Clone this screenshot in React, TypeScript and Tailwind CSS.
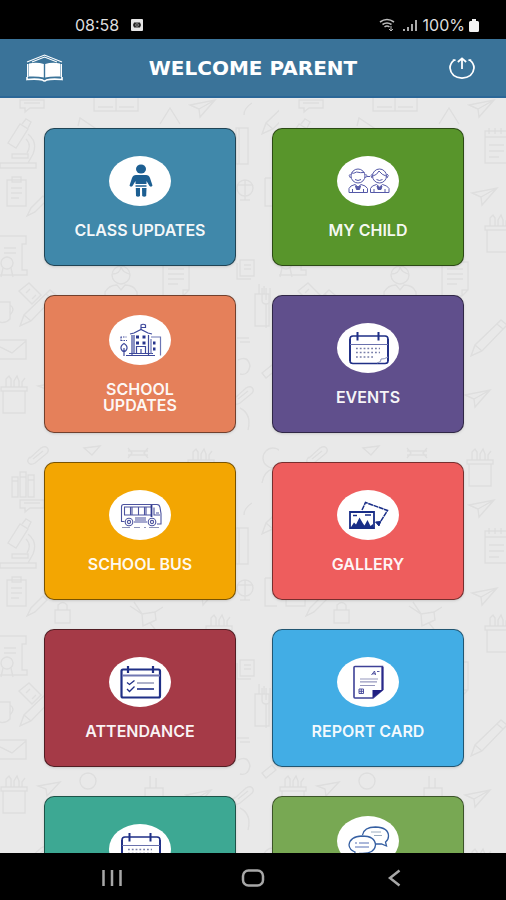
import type { ReactNode } from 'react'

const NAVY = '#1f2f86'

function ChildIcon() {
  return (
    <g fill="#1d5f92">
      <ellipse cx="32" cy="13" rx="5" ry="4.5" />
      <path d="M27 19 h10 q3 0 4 3 l2.500 7.500 q-1 2 -3 .5 l-3 -5 v3 h-11 v-3 l-3 5 q-2 1.500 -3 -.5 l2.500 -7.500 q1 -3 4 -3z" />
      <path d="M26.500 29 h11 v2 h-11z" opacity=".75" />
      <path d="M26.800 32 h4.200 v8 q-2 1.500 -4 0z M33 32 h4.500 l-.3 8 q-2 1.500 -4 0z" />
    </g>
  )
}

function KidsIcon() {
  return (
    <g fill="none" stroke="#5559a8" strokeWidth="1">
      <ellipse cx="21" cy="20" rx="7" ry="7" />
      <path d="M14.500 17 q2 1 5 -1 q4 1 8 .5 M13.500 18 q-2.500 1 0 4 M28.500 18 q2.500 1 0 4 M18 23.500 q3 2 6 0" />
      <path d="M12 36.500 v-4 q1 -3 6 -4 l3 2.500 3 -2.500 q5 1 6.500 4 v4z M15.500 36 v-3 M26.500 36 v-3" />
      <path d="M18.500 30 l2.500 1.500 2.500 -1.500 -1 3.500 h-3z" fill="#5559a8" />
      <ellipse cx="42.500" cy="20" rx="7" ry="7" />
      <path d="M36 20 q4 -1 6 -5 q3 4 7 5 M35.500 18 q-3 1 -.5 4 M50 18 q2.500 1 0 4 M39.500 23.500 q3 2 6 0 M30 20.500 h3" />
      <path d="M33.500 36.500 v-4 q1 -3 6 -4 l3 2.500 3 -2.500 q5 1 6.500 4 v4z M37 36 v-3 M48 36 v-3" />
      <path d="M40 30 l2.500 1.500 2.500 -1.500 -1 3.500 h-3z" fill="#5559a8" />
    </g>
  )
}

function SchoolIcon() {
  return (
    <g fill="none" stroke="#3c489b" strokeWidth="1.200">
      <path d="M32 15 V10 q2 -1.500 4.500 0 v2.500 h-4" />
      <path d="M21 19 l4 -1 7 -3.500 7 3.500 4 1" />
      <path d="M23 20 v20 M39.500 20 v20 M17 40.500 h29 M20 38.500 h24 M25 20 v18" />
      <path d="M42 22 h9.500 v18.500 M42 24 v15" stroke="#6c76b5" />
      <path d="M27.500 38 v-6.500 h9 v6.500 M32 38 v-4" />
      <path d="M11.500 22 h6 M12 25.500 h6 M12 22 v5" strokeDasharray="1.500 1" />
      <path d="M15 28.500 q-3.500 2 -3 5 q1 3 3 3 q2 0 3 -3 q.5 -3 -3 -5z M15 33 v8" />
      <path d="M27 20.500 h3 v3 h-3z M33.500 20.500 h3 v3 h-3z M27 26.500 h3 v3 h-3z M33.500 26.500 h3 v3 h-3z M44 26.500 h2.500 v3 h-2.500z M44 32.500 h2.500 v3 h-2.500z" fill="#27348d" stroke="none" />
    </g>
  )
}

function CalendarIcon() {
  return (
    <g fill="none" stroke={NAVY}>
      <path d="M16 13 H48 q3 0 3 3 V38 q0 2.500 -3 2.500 H16 q-3 0 -3 -2.500 V16 q0 -3 3 -3z" strokeWidth="1.600" />
      <path d="M13 16 v22 M51 16 v22" strokeWidth="1.800" />
      <path d="M20.500 9 v8.500 M41.500 9 v8.500" strokeWidth="2" />
      <path d="M13 21.500 h38" stroke="#6971ad" />
      <path d="M19 25.500 h24 M19 29.500 h24 M19 34 h17" stroke="#777ea8" strokeWidth="1.500" strokeDasharray="1.800 2" />
      <path d="M40 40 q5 -1 4 -4 q3 .5 7 -2" stroke="#8b96bb" />
    </g>
  )
}

function BusIcon() {
  return (
    <g fill="none" stroke="#4c539f" strokeWidth="1.100">
      <path d="M14 14.500 H48 q2.500 0 3 3 l1 6 v10.500 h-4 M12.500 32 V17 q0 -2.500 2 -2.500 M12.500 31.500 h3 M25 32 h13" />
      <path d="M15.500 17 v8 M21.500 17 v8 M23 17 v8 M29.500 17 v8 M35.500 17 v8 M37 17 v8 M15 25 h27 M15 17 h27" />
      <path d="M42.500 15 v12" strokeWidth="1.800" stroke="#30388d" />
      <path d="M45 17.500 v7.500 h6 M47 23 h3 M26 28 h11 M26 30 h11" />
      <circle cx="20" cy="32" r="3.800" />
      <circle cx="20" cy="32" r="1.600" />
      <circle cx="43" cy="32" r="3.800" />
      <circle cx="43" cy="32" r="1.600" />
      <path d="M13 37.500 h8 M25 37.500 h6 M35 37.500 h2 M40 37.500 h10" stroke="#8e93b8" />
    </g>
  )
}

function GalleryIcon() {
  return (
    <g fill="none" stroke="#182d87" strokeWidth="1.800">
      <path d="M25 20 L28.500 12.500 L50.500 20.500 L42 34" strokeWidth="1.500" strokeDasharray="5 .6" />
      <path d="M38.500 32 l5 -.5 -1.500 4.500z" fill="#182d87" strokeWidth="1" />
      <path d="M13 22 H37 V38 H13z" fill="#fff" />
      <path d="M14 37 l3 -4.500 2 2 3.500 -7 3.500 6 1.500 2 3 -5.500 3 6 2.500 -2 v3.500z" fill="#182d87" stroke="none" />
      <path d="M16 25.500 h4 M28 25 h6" strokeWidth="1.400" />
    </g>
  )
}

function AttendanceIcon() {
  return (
    <g fill="none" stroke={NAVY}>
      <path d="M13.500 12.500 H49.500 q1.500 0 1.500 1.500 V39 q0 1.500 -1.500 1.500 H14 q-1.500 0 -1.500 -1.500 V14 q0 -1.500 1.500 -1.500z" strokeWidth="2.200" />
      <path d="M19 9 v7 M44 9 v7" strokeWidth="2.200" />
      <path d="M13 18.500 h38" strokeWidth="2" stroke="#7077b2" />
      <path d="M18 25.500 l2.500 2 5 -4 M18 32 l2.500 2.500 5 -5" strokeWidth="1.300" />
      <path d="M28 26 h17" stroke="#9a9fbd" strokeWidth="1.600" />
      <path d="M28 32 h17" strokeWidth="1.600" />
    </g>
  )
}

function ReportIcon() {
  return (
    <g fill="none" stroke="#3e4197" strokeWidth="1.600">
      <path d="M18 9.500 H45.500 V33 L36 41 H18 q-1 0 -1 -1 V10.500 q0 -1 1 -1z" />
      <path d="M35.500 41 V33 H46z" fill="#201f82" stroke="none" />
      <path d="M45.500 10 v23" stroke="#29298a" strokeWidth="2" />
      <path d="M34.500 18 l3 -4 1 4 M35.500 16.800 h3 M40 14.500 h2.500" strokeWidth=".9" />
      <path d="M23 22 h18 M23 24.800 h17 M23 28.500 h15" stroke="#9597bd" strokeWidth="1.200" />
      <path d="M22 32 h4.500 v4.500 H22z M22 34.300 h4.500 M24.300 32 v4.500" strokeWidth=".9" />
    </g>
  )
}

function ChatIcon() {
  return (
    <g fill="none" stroke="#355fa2" strokeWidth="1.300">
      <path d="M25.500 19 q1.500 -8 13 -8 q13 .5 13 9 q0 4 -3 6 l1 4 -5 -2 h-7" />
      <path d="M25 20 q13 0 13.500 9 q-.5 8 -13 8.500 h-3 l-5 2.500 .5 -4 q-5.500 -2 -6 -7 q1 -8.500 13 -9z" fill="#fff" />
      <path d="M34 16 h10 M37 19.500 h8" stroke="#9aacbf" strokeWidth="1" />
      <path d="M18 27 h2 M22 27 h10 M18 31 h14" stroke="#5670b5" strokeWidth="1" />
    </g>
  )
}

// faint school doodles behind the cards, one tile repeated in both directions
function Doodles() {
  return (
    <svg className="absolute inset-0 h-full w-full" aria-hidden="true">
      <defs>
        <g id="plane">
          <path d="M0 5 L25 0 L10 17 L9 9z M25 0 L9 9" />
        </g>
        <g id="pot">
          <path d="M2 14 h22 v22 h-22z M0 10 h26 v4 h-26z M5 10 V2 l3 -3 2 3 v8 M13 10 V4 l3 -5 2 5 v6 M21 10 V5 l3 -4" />
        </g>
        <g id="pencil">
          <path d="M0 36 L4 25 L30 0 L36 5 L11 31z M4 25 l7 6 M26 4 l6 5" />
        </g>
        <g id="page">
          <path d="M0 0 h26 v28 l-6 6 h-20z M5 7 h16 M5 12 h16 M5 17 h16 M5 22 h10 M26 28 h-6 v6" />
        </g>
        <g id="clip">
          <path d="M3 12 L14 2 q5 -3 7 1 q1 3 -2 5 L8 17 q-5 3 -7 -1 q-1 -2 2 -5 M6 13 l10 -8" />
        </g>
        <g id="books">
          <path d="M0 5 h6 v20 h-6z M8 0 h6 v25 h-6z M16 3 h6 v22 h-6z M0 9 h6 M8 5 h6 M16 8 h6" />
        </g>
        <pattern id="school" width="279" height="400" patternUnits="userSpaceOnUse">
          <g fill="none" stroke="#dedede" strokeWidth="1.400">
            <path d="M20 2 h24 v8 h-14 l-5 4 v-4 h-5z M24 5 h16" />
            <path d="M94 0 v13 h44 v-13 M98 9 h15 M119 9 h15 M116 0 v13" />
            <use href="#plane" x="190" y="2" />
            <use href="#pencil" x="262" y="0" />
            <path d="M78 28 l2 -8 18 12 M160 26 l10 -16 10 16" />
            <path d="M0 70 h36 v-5 h-36z M12 56 h16 v4 h-16z M8 45 L20 26 l8 5 -12 19z M22 26 l4 -5 5 3 -3 6 M28 36 q10 8 5 20 l-5 9 M26 41 q6 6 1 14" />
            <path d="M7 82 h19 v26 h-19z M12 79 h9 v5 h-9z M11 90 h11 M11 95 h11 M11 100 h8" />
            <path d="M27 118 l4 -8 12 -12 4 4 -12 12z" />
            <path d="M0 138 h26 v8 h-4 v26 h5 v5 h-27 M4 150 h12 M4 155 h12" />
            <circle cx="7" cy="165" r="6" />
            <path d="M3 170 l-2 9 M11 170 l2 9" />
            <circle cx="121" cy="177" r="9" />
            <path d="M105 202 v-8 q4 -7 12 -7 l4 5 4 -5 q9 0 12 7 v8 M112 176 q8 0 9 -7 q2 6 9 7" />
            <use href="#page" x="163" y="164" />
            <path d="M240 162 h14 v16 h-14z M237 165 v16 h14 M244 167 h7 M244 171 h7" />
            <path d="M19 193 l10 -8 12 12 -9 9z M49 210 l14 12 4 -5 -12 -12 M30 191 l-4 4 M36 197 l-4 4" />
            <use href="#pencil" x="20" y="192" />
            <path d="M0 204 h10 v17 q-5 5 -10 3 M10 207 q6 4 0 10" />
            <path d="M262 190 v12 q0 4 4 4 v24 M270 190 v12 q0 4 -4 4 M266 190 v12" />
            <path d="M0 242 h26 v19 h-26 M0 249 l12 6 14 -12" />
            <use href="#pot" x="1" y="279" />
            <use href="#clip" x="27" y="348" />
            <path d="M84 350 l16 -2 -8 9z M128 353 h20 M128 357 h20 M128 350 l4 5 -4 5 M148 350 l-4 5 4 5" />
            <use href="#pot" x="188" y="352" />
            <circle cx="273" cy="360" r="10" />
            <path d="M262 385 q2 -12 11 -14 q6 2 6 8" />
            <use href="#books" x="12" y="374" />
            <path d="M236 30 h12 v36 h-12z M239 30 v36 M252 5 q-8 5 -8 12" />
            <circle cx="245" cy="90" r="8" />
            <path d="M240 102 h10 M245 98 v4 M238 87 h14 M245 82 v16" />
            <path d="M206 33 h24 v32 h-24z M206 39 h24 M210 30 v6 M216 30 v6 M222 30 v6 M210 47 h15 M210 53 h15 M210 59 h10" />
            <path d="M265 80 v28 h12 M265 80 h6" />
            <use href="#plane" x="193" y="90" />
            <use href="#pot" x="206" y="118" />
            <use href="#pencil" x="192" y="222" />
            <use href="#plane" x="186" y="292" />
            <path d="M237 240 h12 M240 244 h10 M238 262 q10 -5 12 6 q-2 10 -10 8" />
            <use href="#clip" x="232" y="288" />
            <path d="M130 108 l12 8 13 -2 8 -5 M134 104 l8 12 M142 116 l1 12 13 -6 -1 -8 M150 125 l8 10" />
            <path d="M55 112 h15 v13 h-15z M58 112 v-5 q5 -5 9 0 v5" />
            <path d="M255 196 h14 v32 h-14z M259 196 v-10 M264 196 v-8" />
            <circle cx="88" cy="283" r="8" />
            <path d="M38 288 l22 -4 -13 14 -1 -7z M145 290 h18 v14 h-18z M150 290 v-12 M156 290 v-10" />
            <path d="M240 310 q12 6 8 22 M262 275 l10 -8 4 5 -10 8z" />
          </g>
        </pattern>
      </defs>
      <rect width="100%" height="100%" fill="url(#school)" />
    </svg>
  )
}

interface MenuItem {
  name: string
  color: string
  icon: ReactNode
  label?: string
  labelClass?: string
}

const items: MenuItem[] = [
  { name: 'Class updates', label: 'CLASS UPDATES', color: 'bg-[#4088aa]', icon: <ChildIcon /> },
  { name: 'My child', label: 'MY CHILD', color: 'bg-[#58952b]', icon: <KidsIcon /> },
  { name: 'School updates', label: 'SCHOOL UPDATES', color: 'bg-[#e5805a]', icon: <SchoolIcon /> },
  { name: 'Events', label: 'EVENTS', color: 'bg-[#604f8c]', icon: <CalendarIcon /> },
  { name: 'School bus', label: 'SCHOOL BUS', color: 'bg-[#f3a602]', icon: <BusIcon /> },
  { name: 'Gallery', label: 'GALLERY', color: 'bg-[#ee5d5d]', icon: <GalleryIcon /> },
  { name: 'Attendance', label: 'ATTENDANCE', color: 'bg-[#a53a47]', icon: <AttendanceIcon /> },
  { name: 'Report card', label: 'REPORT CARD', color: 'bg-[#42ade5]', icon: <ReportIcon /> },
  { name: 'Calendar', color: 'bg-[#3da893]', icon: <CalendarIcon /> },
  { name: 'Messages', color: 'bg-[#78a853]', icon: <ChatIcon />, labelClass: 'min-h-8' },
]

function MenuCard({ name, label, color, icon, labelClass = 'min-h-4' }: MenuItem) {
  return (
    <button
      aria-label={name}
      className={`flex h-[138px] flex-col items-center justify-center gap-4 rounded-[10px] border border-black/50 shadow-sm ${color}`}
    >
      <span className="h-[50px] w-[62px] rounded-[50%] bg-white">
        <svg viewBox="0 0 62 50" className="h-full w-full" aria-hidden="true">
          {icon}
        </svg>
      </span>
      <span className={`max-w-[140px] text-center text-[16px] leading-4 font-semibold text-white/95 ${labelClass}`}>
        {label}
      </span>
    </button>
  )
}

function StatusBar() {
  return (
    <div className="flex h-[39px] shrink-0 items-end justify-between bg-black pr-[27px] pb-1 pl-[75px] text-[16px] leading-5 text-[#dedede]">
      <div className="flex items-center gap-3">
        <span>08:58</span>
        <svg viewBox="0 0 12 12" className="h-3 w-3" aria-hidden="true">
          <rect width="12" height="12" rx="1" fill="#e6e6e6" />
          <path d="M3 3.500 h6 l1 2.500 -1 2.500 h-6 l-1 -2.500z" fill="#222" />
          <circle cx="6" cy="6" r="1.800" fill="#999" />
          <path d="M6 5 v2" stroke="#111" />
        </svg>
      </div>
      <div className="flex items-center gap-1">
        <svg viewBox="0 0 40 14" className="h-[14px] w-10" fill="none" stroke="#bdbdbd" aria-hidden="true">
          <path d="M1 4 q7 -5 14 0 M3.500 6.500 q4.500 -3 9 0 M5.500 9 q2.500 -2 5 0" strokeWidth="1.600" />
          <path d="M12 8 v5 M10 11 l2 2 2 -2" />
          <path d="M25 13 v-2 M29 13 V9 M33 13 V6 M37 13 V2" strokeWidth="1.800" />
        </svg>
        <span>100%</span>
        <svg viewBox="0 0 10 13" className="h-[13px] w-[10px]" fill="#f2f2f2" aria-hidden="true">
          <path d="M3 0 h4 v2 h1.500 q1.500 0 1.500 1.500 V11.500 q0 1.500 -1.500 1.500 h-7 Q0 13 0 11.500 V3.500 Q0 2 1.500 2 H3z" />
        </svg>
      </div>
    </div>
  )
}

function Header() {
  return (
    <header className="flex h-[59px] shrink-0 items-center justify-between border-b-2 border-[#2b6797] bg-[#3a7399] px-6">
      <button aria-label="Home" className="flex w-10 justify-center">
        <svg viewBox="0 0 37 28" className="h-7 w-[37px]" aria-hidden="true">
          <path d="M1 8 L18.500 1 L36 8 M6 8 L18.500 3 L31 8" fill="none" stroke="#fff" strokeWidth="1.100" />
          <path d="M1 10 h1.500 v13 h-1.500z M34.500 10 h1.500 v13 h-1.500z" fill="#fff" />
          <path d="M3 9.500 q8 -1.500 14.800 .5 v13.500 q-6 -1.500 -14.800 -1z M34 9.500 q-8 -1.500 -14.800 .5 v13.500 q6 -1.500 14.800 -1z" fill="#fff" />
          <path d="M1 23 v2.500 q10 -1 15.500 .5 q2 2 4 0 q5.500 -1.500 15.500 -.5 v-2.500" fill="none" stroke="#fff" strokeWidth="1.600" />
        </svg>
      </button>
      <h1 className="font-['DejaVu_Sans',sans-serif] text-[20px] leading-6 font-bold text-white">WELCOME PARENT</h1>
      <button aria-label="Log out" className="flex w-10 justify-center">
        <svg viewBox="0 0 30 26" className="h-6 w-7" fill="none" stroke="#fff" strokeWidth="1.900" aria-hidden="true">
          <path d="M6.500 4.500 Q2 8 2 13 Q3 23 15 24 Q27 23 28 13 Q28 8 23.500 4.500 M5 4.500 h3 M22 4.500 h3" />
          <path d="M15 14 V3 M10.500 6.500 L15 2.500 L19.500 6.500" />
        </svg>
      </button>
    </header>
  )
}

function NavBar() {
  return (
    <nav className="grid h-[47px] shrink-0 grid-cols-3 place-items-center bg-black px-[41px] pt-0.5">
      <button aria-label="Recent apps">
        <svg viewBox="0 0 20 18" className="h-[18px] w-5" stroke="#a8a8a8" strokeWidth="2.500" aria-hidden="true">
          <path d="M1.500 1 v16 M10 1 v16 M18.500 1 v16" />
        </svg>
      </button>
      <button aria-label="Home screen">
        <svg viewBox="0 0 24 18" className="h-[18px] w-6" fill="none" stroke="#a8a8a8" strokeWidth="2.500" aria-hidden="true">
          <rect x="2" y="1.500" width="20" height="15" rx="5.500" />
        </svg>
      </button>
      <button aria-label="Back">
        <svg viewBox="0 0 14 18" className="h-[18px] w-[14px]" fill="none" stroke="#a8a8a8" strokeWidth="2.500" aria-hidden="true">
          <path d="M12.500 1.500 L3 9 L12.500 16.500" />
        </svg>
      </button>
    </nav>
  )
}

export default function App() {
  return (
    <div className="flex h-screen flex-col bg-[#e9e9e9] font-['Inter',sans-serif]">
      <StatusBar />
      <Header />
      <main className="relative min-h-0 flex-1 overflow-y-auto [scrollbar-width:none]">
        <Doodles />
        <div className="relative grid grid-cols-2 gap-x-9 gap-y-[29px] py-[30px] pr-[42px] pl-11">
          {items.map((item) => (
            <MenuCard key={item.name} {...item} />
          ))}
        </div>
      </main>
      <NavBar />
    </div>
  )
}
